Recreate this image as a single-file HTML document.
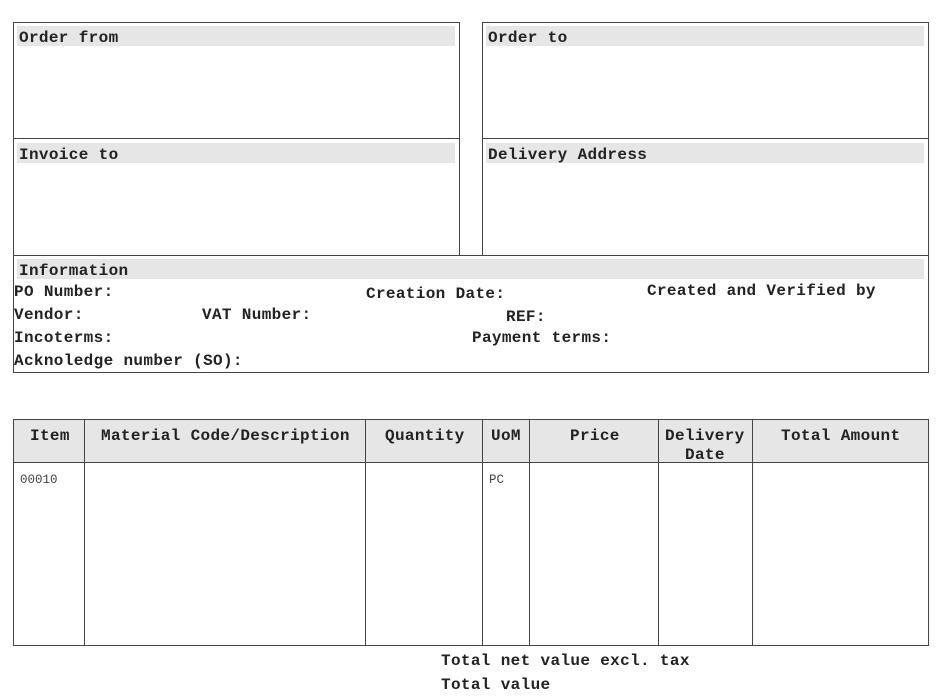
<!DOCTYPE html><html><head><style>
body{margin:0;width:940px;height:696px;background:#fff;position:relative;overflow:hidden;font-family:"Liberation Mono",monospace;font-weight:bold;font-size:16px;color:#222;letter-spacing:0.35px}
.b{position:absolute;border:1px solid #444;box-sizing:border-box}
.g{position:absolute;background:#e6e6e6}
.t{position:absolute;line-height:16px;white-space:nowrap;margin-top:1px}
.v{position:absolute;top:419px;height:226px;width:1px;background:#444}
.s{position:absolute;font-weight:normal;font-size:12.5px;color:#444;line-height:12px;letter-spacing:0}
</style></head><body>
<div class="b" style="left:13px;top:22px;width:447px;height:234px"></div>
<div class="b" style="left:13px;top:138px;width:447px;height:1px;border-width:1px 0 0"></div>
<div class="b" style="left:482px;top:22px;width:447px;height:234px"></div>
<div class="b" style="left:482px;top:138px;width:447px;height:1px;border-width:1px 0 0"></div>
<div class="g" style="left:17px;top:26px;width:438px;height:20px"></div>
<div class="g" style="left:486px;top:26px;width:438px;height:20px"></div>
<div class="g" style="left:17px;top:143px;width:438px;height:20px"></div>
<div class="g" style="left:486px;top:143px;width:438px;height:20px"></div>
<div class="t" style="left:19px;top:29px">Order from</div>
<div class="t" style="left:488px;top:29px">Order to</div>
<div class="t" style="left:19px;top:146px">Invoice to</div>
<div class="t" style="left:488px;top:146px">Delivery Address</div>
<div class="b" style="left:13px;top:255px;width:916px;height:118px"></div>
<div class="g" style="left:17px;top:259px;width:907px;height:20px"></div>
<div class="t" style="left:19px;top:262px">Information</div>
<div class="t" style="left:14px;top:283px">PO Number:</div>
<div class="t" style="left:366px;top:285px">Creation Date:</div>
<div class="t" style="left:647px;top:282px">Created and Verified by</div>
<div class="t" style="left:14px;top:306px">Vendor:</div>
<div class="t" style="left:202px;top:306px">VAT Number:</div>
<div class="t" style="left:506px;top:308px">REF:</div>
<div class="t" style="left:14px;top:329px">Incoterms:</div>
<div class="t" style="left:472px;top:329px">Payment terms:</div>
<div class="t" style="left:14px;top:352px">Acknoledge number (SO):</div>
<div class="b" style="left:13px;top:419px;width:916px;height:227px"></div>
<div class="g" style="left:14px;top:420px;width:914px;height:42px"></div>
<div class="b" style="left:13px;top:462px;width:916px;height:1px;border-width:1px 0 0"></div>
<div class="v" style="left:84px"></div><div class="v" style="left:365px"></div><div class="v" style="left:482px"></div><div class="v" style="left:529px"></div><div class="v" style="left:658px"></div><div class="v" style="left:752px"></div>
<div class="t" style="left:30px;top:427px">Item</div>
<div class="t" style="left:101px;top:427px">Material Code/Description</div>
<div class="t" style="left:385px;top:427px">Quantity</div>
<div class="t" style="left:491px;top:427px">UoM</div>
<div class="t" style="left:570px;top:427px">Price</div>
<div class="t" style="left:665px;top:427px">Delivery</div>
<div class="t" style="left:685px;top:446px">Date</div>
<div class="t" style="left:781px;top:427px">Total Amount</div>
<div class="s" style="left:20px;top:474px">00010</div>
<div class="s" style="left:489px;top:474px">PC</div>
<div class="t" style="left:441px;top:652px">Total net value excl. tax</div>
<div class="t" style="left:441px;top:676px">Total value</div>
</body></html>
